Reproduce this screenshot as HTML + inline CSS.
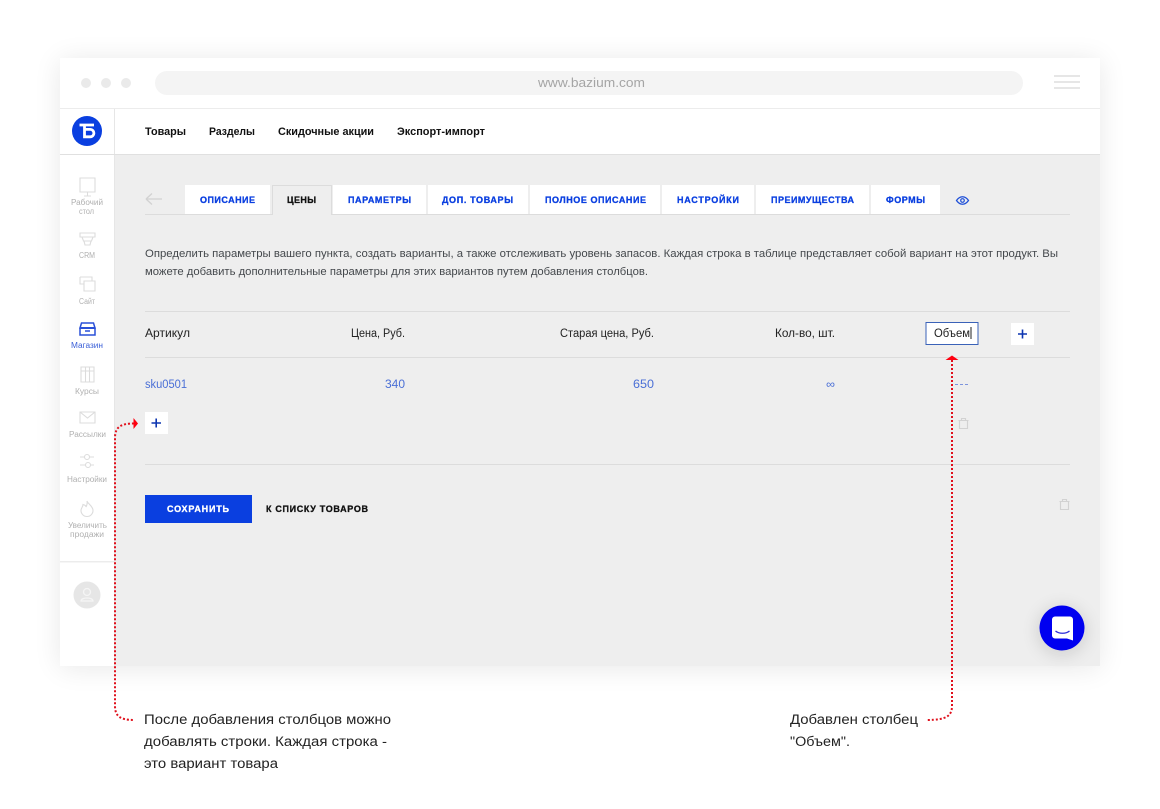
<!DOCTYPE html>
<html lang="ru"><head><meta charset="utf-8"><title>Bazium</title>
<style>
html,body{margin:0;padding:0;background:#fff;width:1160px;height:809px;overflow:hidden}
svg{display:block}
text{font-family:"Liberation Sans","DejaVu Sans",sans-serif}
.nav{font-size:11px;font-weight:bold;fill:#111}
.tab{font-size:9px;font-weight:bold;fill:#0a3fe0;stroke:#0a3fe0;stroke-width:.3}
.side{font-size:8px;fill:#b0b0b0}
.p{font-size:11px;fill:#44484c}
.th{font-size:11.5px;fill:#222}
.td{font-size:11.5px;fill:#4a6fd6}
.note{font-size:13.5px;fill:#222}
.ic{fill:none;stroke:#dcdcdc;stroke-width:1.1}
.dot{fill:none;stroke:#e0101c;stroke-width:2;stroke-dasharray:2 2}
</style></head><body>
<svg xmlns="http://www.w3.org/2000/svg" width="1160" height="809" viewBox="0 0 1160 809">
<defs>
<filter id="sh" x="-10%" y="-10%" width="120%" height="120%"><feGaussianBlur stdDeviation="14"/></filter>
<filter id="sh2" x="-60%" y="-60%" width="220%" height="220%"><feGaussianBlur stdDeviation="9"/></filter>
</defs>
<rect x="60" y="60" width="1040" height="608" fill="#000" opacity=".09" filter="url(#sh)"/>
<rect x="60" y="58" width="1040" height="608" fill="#fff"/>

<!-- browser bar -->
<circle cx="86" cy="83" r="5" fill="#eaeaea"/><circle cx="106" cy="83" r="5" fill="#eaeaea"/><circle cx="126" cy="83" r="5" fill="#eaeaea"/>
<rect x="155" y="71" width="868" height="24" rx="12" fill="#f4f4f4"/>
<text x="538" y="87" font-size="12.5" fill="#a5a5a5" textLength="107" lengthAdjust="spacingAndGlyphs">www.bazium.com</text>
<rect x="1054" y="75" width="26" height="2" fill="#e6e6e6"/><rect x="1054" y="81" width="26" height="2" fill="#e6e6e6"/><rect x="1054" y="87" width="26" height="2" fill="#e6e6e6"/>
<rect x="60" y="108" width="1040" height="1" fill="#ececec"/>

<!-- content -->
<rect x="115" y="155" width="985" height="511" fill="#eeeeee"/>
<rect x="114" y="109" width="1" height="557" fill="#e6e6e6"/>
<rect x="60" y="154" width="1040" height="1" fill="#e0e0e0"/>

<!-- logo -->
<circle cx="87" cy="131" r="15" fill="#0a3fe0"/>
<path d="M79.500 125H94M84.500 125V136.800H90.200a3.700 3.700 0 0 0 0-7.400H84.500" fill="none" stroke="#fff" stroke-width="2.800"/>

<!-- top nav -->
<text class="nav" x="145" y="135" textLength="41" lengthAdjust="spacingAndGlyphs">Товары</text>
<text class="nav" x="209" y="135" textLength="46" lengthAdjust="spacingAndGlyphs">Разделы</text>
<text class="nav" x="278" y="135" textLength="96" lengthAdjust="spacingAndGlyphs">Скидочные акции</text>
<text class="nav" x="397" y="135" textLength="88" lengthAdjust="spacingAndGlyphs">Экспорт-импорт</text>

<!-- sidebar -->
<path class="ic" d="M80 178H95V192H80ZM84 196H91M87.500 192V196"/>
<text class="side" x="71" y="205" textLength="32" lengthAdjust="spacingAndGlyphs">Рабочий</text>
<text class="side" x="79" y="214" textLength="15" lengthAdjust="spacingAndGlyphs">стол</text>
<path class="ic" d="M80 233H95V237H80ZM82 237H93L91.500 241H83.500ZM84 241H91L90 245H85Z"/>
<text class="side" x="79" y="258" textLength="16" lengthAdjust="spacingAndGlyphs">CRM</text>
<path class="ic" d="M80 277V284H84M80 277H92V281M84 281H95V291H84Z"/>
<text class="side" x="79" y="304" textLength="16" lengthAdjust="spacingAndGlyphs">Сайт</text>
<path d="M81.500 323H93.500L95 328H80ZM80 328H95V335H80ZM85 331H90" fill="none" stroke="#2a50d8" stroke-width="1.500"/>
<rect x="80" y="327" width="15" height="2" fill="#2a50d8"/>
<text x="71" y="348" font-size="8" fill="#3a5fd8" textLength="32" lengthAdjust="spacingAndGlyphs">Магазин</text>
<path class="ic" d="M81 367H94V382H81ZM85.500 367V382M89.500 367V382M81 371H94"/>
<text class="side" x="75" y="394" textLength="24" lengthAdjust="spacingAndGlyphs">Курсы</text>
<path class="ic" d="M80 412H95V423H80ZM80 412L87.500 418L95 412"/>
<text class="side" x="69" y="437" textLength="37" lengthAdjust="spacingAndGlyphs">Рассылки</text>
<path class="ic" d="M80 457H84M90 457H94M80 465H85M91 465H94"/><circle class="ic" cx="87" cy="457" r="2.500"/><circle class="ic" cx="88" cy="465" r="2.500"/>
<text class="side" x="67" y="482" textLength="40" lengthAdjust="spacingAndGlyphs">Настройки</text>
<path class="ic" d="M87 501C88 504 93 506 93 510.500A6 6 0 0 1 81 510.500C81 508 83 507 83 504.500C85 505 86 506 86 507C87 505 87.500 503 87 501Z"/>
<text class="side" x="68" y="528" textLength="39" lengthAdjust="spacingAndGlyphs">Увеличить</text>
<text class="side" x="70" y="537" textLength="34" lengthAdjust="spacingAndGlyphs">продажи</text>
<rect x="60" y="561" width="54" height="1.500" fill="#ececec"/>
<circle cx="87" cy="595" r="13.500" fill="#e6e6e6"/>
<circle cx="87" cy="592" r="3.500" fill="none" stroke="#f5f5f5" stroke-width="1.300"/>
<path d="M81 601C81 597 93 597 93 601Z" fill="none" stroke="#f5f5f5" stroke-width="1.300"/>

<!-- tabs -->
<rect x="145" y="214" width="925" height="1" fill="#dcdcdc"/>
<path d="M146 199H162M146 199L152 193.500M146 199L152 204.500" fill="none" stroke="#d2d2d2" stroke-width="1.300"/>
<rect x="185" y="185" width="85" height="29" fill="#fff"/>
<path d="M272.500 215V185.500H331.500V215" fill="#eee" stroke="#dcdcdc"/>
<rect x="333" y="185" width="93" height="29" fill="#fff"/>
<rect x="428" y="185" width="100" height="29" fill="#fff"/>
<rect x="530" y="185" width="130" height="29" fill="#fff"/>
<rect x="662" y="185" width="92" height="29" fill="#fff"/>
<rect x="756" y="185" width="113" height="29" fill="#fff"/>
<rect x="871" y="185" width="69" height="29" fill="#fff"/>
<text class="tab" x="200" y="203" textLength="55" lengthAdjust="spacing">ОПИСАНИЕ</text>
<text class="tab" x="287" y="203" textLength="29" lengthAdjust="spacing" style="fill:#111;stroke:#111">ЦЕНЫ</text>
<text class="tab" x="348" y="203" textLength="63" lengthAdjust="spacing">ПАРАМЕТРЫ</text>
<text class="tab" x="442" y="203" textLength="71" lengthAdjust="spacing">ДОП. ТОВАРЫ</text>
<text class="tab" x="545" y="203" textLength="101" lengthAdjust="spacing">ПОЛНОЕ ОПИСАНИЕ</text>
<text class="tab" x="677" y="203" textLength="62" lengthAdjust="spacing">НАСТРОЙКИ</text>
<text class="tab" x="771" y="203" textLength="83" lengthAdjust="spacing">ПРЕИМУЩЕСТВА</text>
<text class="tab" x="886" y="203" textLength="39" lengthAdjust="spacing">ФОРМЫ</text>
<path d="M956.500 200.500C960 195.500 965 195.500 968.500 200.500C965 205.500 960 205.500 956.500 200.500Z" fill="none" stroke="#1f50d8" stroke-width="1.300"/>
<circle cx="962.500" cy="200.500" r="1.800" fill="none" stroke="#1f50d8" stroke-width="1.200"/>

<!-- description -->
<text class="p" x="145" y="257" textLength="913" lengthAdjust="spacingAndGlyphs">Определить параметры вашего пункта, создать варианты, а также отслеживать уровень запасов. Каждая строка в таблице представляет собой вариант на этот продукт. Вы</text>
<text class="p" x="145" y="275" textLength="503" lengthAdjust="spacingAndGlyphs">можете добавить дополнительные параметры для этих вариантов путем добавления столбцов.</text>

<!-- table -->
<rect x="145" y="311" width="925" height="1" fill="#dcdcdc"/>
<rect x="145" y="357" width="925" height="1" fill="#dcdcdc"/>
<rect x="145" y="464" width="925" height="1" fill="#dcdcdc"/>
<text class="th" x="145" y="337" textLength="45" lengthAdjust="spacingAndGlyphs">Артикул</text>
<text class="th" x="351" y="337" textLength="54" lengthAdjust="spacingAndGlyphs">Цена, Руб.</text>
<text class="th" x="560" y="337" textLength="94" lengthAdjust="spacingAndGlyphs">Старая цена, Руб.</text>
<text class="th" x="775" y="337" textLength="60" lengthAdjust="spacingAndGlyphs">Кол-во, шт.</text>
<rect x="926" y="322.500" width="52" height="22" fill="#fff" stroke="#3a62b8"/>
<text class="th" x="934" y="337" textLength="36" lengthAdjust="spacingAndGlyphs">Объем</text>
<rect x="970.500" y="327" width="1" height="12" fill="#222"/>
<rect x="1011" y="323" width="23" height="22" fill="#fff"/>
<path d="M1018 334H1027M1022.500 329.500V338.500" stroke="#0d35b0" stroke-width="1.600" fill="none"/>
<text class="td" x="145" y="388" textLength="42" lengthAdjust="spacingAndGlyphs">sku0501</text>
<text class="td" x="385" y="388" textLength="20" lengthAdjust="spacingAndGlyphs">340</text>
<text class="td" x="633" y="388" textLength="21" lengthAdjust="spacingAndGlyphs">650</text>
<text class="td" x="826" y="388" textLength="9" lengthAdjust="spacingAndGlyphs">∞</text>
<path d="M955 384.500H968" stroke="#7d94dc" stroke-width="1" stroke-dasharray="3 2"/>
<rect x="145" y="412" width="23" height="22" fill="#fff"/>
<path d="M151.500 423H161M156.200 418.500V427.500" stroke="#0d35b0" stroke-width="1.600" fill="none"/>
<path d="M959.500 420.500V428.500H967.500V420.500ZM958.500 420.500H968.500M961.500 420.500V418.500H965.500V420.500" fill="none" stroke="#d2d2d2" stroke-width="1.100"/>

<!-- save -->
<rect x="145" y="495" width="107" height="28" fill="#0a3fe0"/>
<text x="167" y="512" font-size="9" font-weight="bold" fill="#fff" stroke="#fff" stroke-width=".3" textLength="62" lengthAdjust="spacing">СОХРАНИТЬ</text>
<text x="266" y="512" font-size="9" font-weight="bold" fill="#111" stroke="#111" stroke-width=".3" textLength="102" lengthAdjust="spacing">К СПИСКУ ТОВАРОВ</text>
<path d="M1060.500 501.500V509.500H1068.500V501.500ZM1059.500 501.500H1069.500M1062.500 501.500V499.500H1066.500V501.500" fill="none" stroke="#d2d2d2" stroke-width="1.100"/>

<!-- chat -->
<circle cx="1062" cy="631" r="24" fill="#000" opacity=".13" filter="url(#sh2)"/>
<circle cx="1062" cy="628" r="22.500" fill="#0000f0"/>
<path d="M1055 616.500H1070A3 3 0 0 1 1073 619.500V640.500L1067 638.500H1055A3 3 0 0 1 1052 635.500V619.500A3 3 0 0 1 1055 616.500Z" fill="#fff"/>
<path d="M1055.500 631C1059 634 1066 634 1069.500 631" fill="none" stroke="#2a2ad8" stroke-width="1.300"/>

<!-- annotations -->
<path class="dot" d="M134 423.500C122 423.500 115 426 115 438V706C115 716 120 720 134 720"/>
<path d="M133.500 418L138 423.500L133.500 429Z" fill="#ff0010"/>
<path class="dot" d="M952 360V706C952 716 946 720 927 720"/>
<path d="M945.500 360L952 355.500L958.500 360Z" fill="#ff0010"/>
<text class="note" x="144" y="724" textLength="247" lengthAdjust="spacingAndGlyphs">После добавления столбцов можно</text>
<text class="note" x="144" y="746" textLength="243" lengthAdjust="spacingAndGlyphs">добавлять строки. Каждая строка -</text>
<text class="note" x="144" y="768" textLength="134" lengthAdjust="spacingAndGlyphs">это вариант товара</text>
<text class="note" x="790" y="724" textLength="128" lengthAdjust="spacingAndGlyphs">Добавлен столбец</text>
<text class="note" x="790" y="746" textLength="60" lengthAdjust="spacingAndGlyphs">"Объем".</text>
</svg>
</body></html>
